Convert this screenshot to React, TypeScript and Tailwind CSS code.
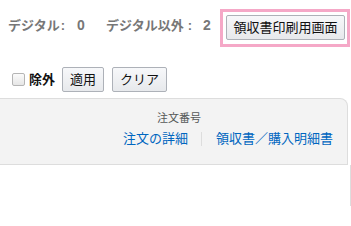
const btn = "h-[25px] border border-[#adb1b8] rounded-[2px] bg-gradient-to-b from-[#f7f8fa] to-[#e7e9ec] text-[13px] leading-none text-[#111]";

export default function App() {
    return (
        <div className="w-[351px] h-[226px] overflow-hidden bg-white text-[#111] font-['Liberation_Sans','Noto_Sans_CJK_JP',sans-serif]">
            <div className="flex justify-between pt-[9px] pr-[1px]">
                <div className="flex items-baseline pl-2 pt-[7px] text-[13px] font-bold text-[#777] leading-[18px]">
                    <span>デジタル</span>
                    <span className="ml-[1px]">:</span>
                    <span className="ml-[12px] text-[14px]">0</span>
                    <span className="ml-[21px]">デジタル以外</span>
                    <span className="ml-[4px]">:</span>
                    <span className="ml-[11px] text-[14px]">2</span>
                </div>
                <div className="border-[3px] border-[#f5a8c7] pl-[3px] pr-[2px] pt-[3px] pb-[4px]">
                    <button className={btn + " w-[119px]"}>
                        領収書印刷用画面
                    </button>
                </div>
            </div>

            <div className="flex items-center mt-[20px] pl-3">
                <input
                    type="checkbox"
                    className="appearance-none w-[13px] h-[13px] m-0 border border-[#b5b5b5] rounded-[2px] bg-gradient-to-b from-[#fbfbfb] to-[#e6e6e6]"
                />
                <span className="ml-[4px] text-[13px] font-bold leading-none">除外</span>
                <button className={btn + " ml-[7px] w-[42px]"}>
                    適用
                </button>
                <button className={btn + " ml-[8px] w-[55px]"}>
                    クリア
                </button>
            </div>

            <div className="mt-[6px] w-[348px] h-[67px] bg-[#f3f3f3] border-t border-r border-b border-[#ddd] rounded-tr-[8px] flex flex-col items-end pr-[14px]">
                <div className="mt-[12px] mr-[132px] text-[11px] leading-[14px] text-[#565959]">注文番号</div>
                <div className="flex items-center mt-[6px] text-[13px] leading-[16px] text-[#0066c0]">
                    <span>注文の詳細</span>
                    <span className="ml-[13px] mr-[14px] w-px h-[14px] bg-[#ddd]" />
                    <span>領収書／購入明細書</span>
                </div>
            </div>
            <div className="w-[351px] h-[41px] border-r border-[#ddd]" />
        </div>
    );
}
